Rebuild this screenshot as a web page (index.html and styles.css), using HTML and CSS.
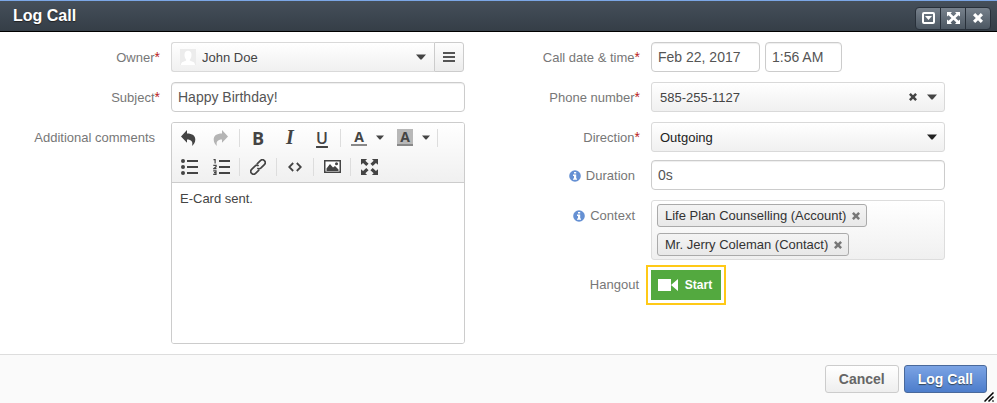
FILE: index.html
```html
<!DOCTYPE html>
<html lang="en">
<head>
<meta charset="utf-8">
<title>Log Call</title>
<link rel="stylesheet" href="styles.css">
</head>
<body>
<svg class="defs" aria-hidden="true">
  <symbol id="caret" viewBox="0 0 10 6"><path d="M0 0.500h10L5.600 5.500h-1.200z"/></symbol>
  <symbol id="cross" viewBox="0 0 10 10"><path d="M2.200 0 5 2.800 7.800 0 10 2.200 7.200 5 10 7.800 7.800 10 5 7.200 2.200 10 0 7.800 2.800 5 0 2.200z"/></symbol>
  <symbol id="info" viewBox="0 0 12 12"><circle cx="6" cy="6" r="5.800" fill="#6590d3"/><path d="M5 2h2.200v1.600H5zM4 4.600h3.200V8.400H8V9.800H4V8.400h1V6H4z" fill="#fff"/></symbol>
  <symbol id="expand" viewBox="0 0 18 18"><path d="M0 0h7L4.800 2.200 8 5.400 5.400 8 2.200 4.800 0 7zM18 0v7l-2.200-2.200L12.600 8 10 5.400l3.200-3.200L11 0zM0 18v-7l2.200 2.200L5.400 10 8 12.600l-3.200 3.200L7 18zM18 18h-7l2.200-2.200L10 12.600l2.600-2.600 3.200 3.200L18 11z"/></symbol>
</svg>
<form class="dialog">
  <header class="titlebar">
    <h1>Log Call</h1>
    <div class="window-buttons">
      <button type="button" aria-label="Minimize"><svg width="13" height="12" viewBox="0 0 13 12"><rect x="1" y="1" width="11" height="10" rx="1" fill="none" stroke="#fff" stroke-width="2"/><path d="M3 4h7L6.500 8z"/></svg></button>
      <button type="button" aria-label="Maximize"><svg width="13" height="12" viewBox="0 0 13 12"><path d="M0 0h5L3.600 1.400 6.500 4.200 9.400 1.400 8 0h5v4.600L11.500 3.200 8.500 6l3 2.800L13 7.400V12H8l1.400-1.400L6.500 7.800 3.600 10.600 5 12H0V7.400l1.500 1.400 3-2.800-3-2.800L0 4.600z"/></svg></button>
      <button type="button" aria-label="Close"><svg width="10" height="10"><use href="#cross"/></svg></button>
    </div>
  </header>
  <main class="fields">
    <section class="column">
      <div class="row">
        <label class="required" for="owner">Owner</label>
        <div class="field owner">
          <div class="picker">
            <svg class="avatar" width="16" height="16" viewBox="0 0 16 16"><path d="M0 0h16v16H0z" fill="#ececec"/><path d="M1 16c0-3 2.500-3.200 4.800-4.200.6-.3.500-1 .1-1.600C4.700 9 4.500 7 4.500 5.500 4.500 3 6 1.800 8 1.800s3.500 1.200 3.500 3.700c0 1.500-.2 3.500-1.400 4.700-.4.600-.5 1.300.1 1.600C12.500 12.800 15 13 15 16z" fill="#fff"/></svg>
            <select id="owner"><option>John Doe</option></select>
            <svg class="caret" width="10" height="6"><use href="#caret"/></svg>
          </div>
          <button type="button" class="list-button" aria-label="Browse"><svg width="12" height="10" viewBox="0 0 12 10"><path d="M0 0h12v2H0zM0 4h12v2H0zM0 8h12v2H0z"/></svg></button>
        </div>
      </div>
      <div class="row">
        <label class="required" for="subject">Subject</label>
        <div class="field"><input class="text" id="subject" value="Happy Birthday!"></div>
      </div>
      <div class="row">
        <label for="comments">Additional comments</label>
        <div class="field editor">
          <div class="toolbar">
            <div class="tools">
              <button type="button" aria-label="Undo"><svg width="16" height="16" viewBox="0 0 16 16"><path d="M6 0v3.500c5.500 0 8.300 2.200 8.300 6 0 2.500-1 4.500-3.300 6.500 1.200-4.200-.5-6.500-5-6.500v3.300L0 6.400z"/></svg></button>
              <button type="button" class="off" aria-label="Redo"><svg width="16" height="16" viewBox="0 0 16 16"><path d="M9 0v3.500C3.500 3.500.7 5.700.7 9.500c0 2.500 1 4.500 3.300 6.500-1.200-4.200.5-6.500 5-6.500v3.300l6-6.400z"/></svg></button>
              <i class="split"></i>
              <button type="button" class="bold">B</button>
              <button type="button" class="italic">I</button>
              <button type="button" class="underline">U</button>
              <i class="split"></i>
              <button type="button" class="menu"><span class="color">A</span><svg width="8" height="5"><use href="#caret"/></svg></button>
              <button type="button" class="menu"><span class="color fill">A</span><svg width="8" height="5"><use href="#caret"/></svg></button>
              <i class="split"></i>
            </div>
            <div class="tools">
              <button type="button" aria-label="Bulleted list"><svg width="17" height="16" viewBox="0 0 17 16"><circle cx="2" cy="2" r="2"/><circle cx="2" cy="8" r="2"/><circle cx="2" cy="14" r="2"/><path d="M6 1h11v2H6zM6 7h11v2H6zM6 13h11v2H6z"/></svg></button>
              <button type="button" aria-label="Numbered list"><svg width="17" height="16" viewBox="0 0 17 16"><path d="M6 1h11v2H6zM6 7h11v2H6zM6 13h11v2H6z"/><path d="M.5.600H2.100v3.900M.3 6.300h2.800v1.400L.8 9.700H3.500M.2 11.800h2.800v3.600H.2M1 13.600h2" fill="none" stroke="#444" stroke-width="1.200"/></svg></button>
              <i class="split"></i>
              <button type="button" aria-label="Link"><svg width="16" height="16" viewBox="0 0 16 16"><g fill="none" stroke="#444" stroke-width="1.700" transform="rotate(-45 8 8)"><path d="M6.800 10.800H1.800a2.800 2.800 0 0 1 0-5.600h4.700a2.800 2.800 0 0 1 2.700 2.500"/><path d="M9.200 5.200h5a2.800 2.800 0 0 1 0 5.600H9.500a2.800 2.800 0 0 1-2.700-2.500"/></g></svg></button>
              <i class="split"></i>
              <button type="button" aria-label="Source"><svg width="14" height="10" viewBox="0 0 14 10"><path d="M5.200 1 1.200 5l4 4M8.800 1l4 4-4 4" fill="none" stroke="#444" stroke-width="1.800"/></svg></button>
              <i class="split"></i>
              <button type="button" aria-label="Image"><svg width="17" height="13" viewBox="0 0 17 13"><path d="M.75.75h15.500v11.500H.75z" fill="#fff" stroke="#444" stroke-width="1.500"/><path d="M2.500 11V8.500L6 4l3 3.500L11 6l3.500 3.500V11z"/><circle cx="12.500" cy="3.700" r="1.500"/></svg></button>
              <i class="split"></i>
              <button type="button" aria-label="Full screen"><svg width="17" height="16" viewBox="0 0 18 18" preserveAspectRatio="none"><path d="M0 0h6.500L4.600 2 8 5.400 5.600 7.800 2.200 4.400 0 6.500zM18 0v6.500l-2.200-2.100-3.400 3.400L10 5.400 13.400 2 11.500 0zM0 18v-6.500l2.200 2.100 3.400-3.400L8 12.600 4.600 16l1.900 2zM18 18h-6.500l1.900-2L10 12.600l2.400-2.400 3.400 3.400 2.200-2.100z"/></svg></button>
            </div>
          </div>
          <textarea id="comments">E-Card sent.</textarea>
        </div>
      </div>
    </section>
    <section class="column">
      <div class="row">
        <label class="required" for="date">Call date &amp; time</label>
        <div class="field moment">
          <input class="text date" id="date" value="Feb 22, 2017">
          <input class="text time" aria-label="Time" value="1:56 AM">
        </div>
      </div>
      <div class="row">
        <label class="required" for="phone">Phone number</label>
        <div class="field picker">
          <select id="phone"><option>585-255-1127</option></select>
          <button type="button" class="clear" aria-label="Clear"><svg width="8" height="8"><use href="#cross"/></svg></button>
          <svg class="caret" width="10" height="6"><use href="#caret"/></svg>
        </div>
      </div>
      <div class="row tight">
        <label class="required" for="direction">Direction</label>
        <div class="field picker dark">
          <select id="direction"><option>Outgoing</option></select>
          <svg class="caret" width="10" height="6"><use href="#caret"/></svg>
        </div>
      </div>
      <div class="row">
        <label for="duration"><svg class="info" width="12" height="12"><use href="#info"/></svg>Duration</label>
        <div class="field"><input class="text" id="duration" value="0s"></div>
      </div>
      <div class="row">
        <span class="label" id="context"><svg class="info" width="12" height="12"><use href="#info"/></svg>Context</span>
        <div class="field tags" role="group" aria-labelledby="context">
          <span class="tag">Life Plan Counselling (Account)<button type="button" aria-label="Remove account"><svg width="8" height="8"><use href="#cross"/></svg></button></span>
          <span class="tag">Mr. Jerry Coleman (Contact)<button type="button" aria-label="Remove contact"><svg width="8" height="8"><use href="#cross"/></svg></button></span>
        </div>
      </div>
      <div class="row">
        <label class="plain" for="hangout">Hangout</label>
        <button type="button" class="start" id="hangout"><svg width="20" height="12" viewBox="0 0 20 12"><path d="M0 0h13v12H0zM13 6l7-6v12z"/></svg>Start</button>
      </div>
    </section>
  </main>
  <footer class="actions">
    <button type="button" class="action">Cancel</button>
    <button type="submit" class="action primary">Log Call</button>
    <svg class="grip" width="11" height="10" viewBox="0 0 11 10"><path d="M0.500 9.500 9.500 0.500M4.500 9.500l5-5M8.500 9.500l1-1" stroke="#000" stroke-width="1.500"/></svg>
  </footer>
</form>
</body>
</html>
```

FILE: styles.css
```css
* { box-sizing: border-box; }

body {
  margin: 0;
  background: #fff;
  color: #444;
  font: 13px/20px "Liberation Sans", Arial, sans-serif;
}

svg { display: block; fill: currentColor; flex: none; }
.defs { position: absolute; width: 0; height: 0; }

button, input, select, textarea { font: inherit; color: inherit; margin: 0; }
button {
  display: flex;
  align-items: center;
  justify-content: center;
  padding: 0;
  border: 0;
  background: none;
}

.dialog { display: flex; flex-direction: column; min-height: 100vh; }

.titlebar {
  display: flex;
  align-items: center;
  justify-content: space-between;
  height: 32px;
  padding: 0 6px 0 13px;
  border-top: 1px solid #7ba6e6;
  border-bottom: 1px solid #000;
  background: linear-gradient(#454f5a, #353e47);
  color: #fff;
}
.titlebar h1 { margin: 0; font-size: 16px; line-height: 28px; text-shadow: 0 1px 1px #222; }

.window-buttons {
  display: flex;
  margin-top: 4px;
  border: 1px solid #28303a;
  border-radius: 4px;
  background: linear-gradient(#77818c, #4b5661);
}
.window-buttons button { width: 24px; height: 21px; }
.window-buttons button + button { width: 25px; border-left: 1px solid #28303a; }

.fields {
  display: grid;
  grid-template-columns: 1fr 1fr;
  gap: 15px;
  flex: 1;
  padding: 10px 52px 10px 0;
}

.row { display: flex; gap: 11px; margin-bottom: 10px; }
.row.tight { margin-bottom: 8px; }
.row:last-child { margin-bottom: 0; }

label, .label {
  display: flex;
  align-items: center;
  justify-content: flex-end;
  flex: none;
  width: 160px;
  height: 30px;
  padding: 2px 5px 0 0;
  color: #777;
}
label.required { padding-right: 0; }
label.required::after { content: "*"; color: #b22; font-size: 14px; margin-bottom: 2px; }
label.plain { padding: 0 1px 0 0; }
.info { margin-right: 5px; }

.field { flex: 1; min-width: 0; }

.text {
  display: block;
  width: 100%;
  height: 30px;
  padding: 0 6px;
  border: 1px solid #ccc;
  border-radius: 4px;
  background: #fff;
  box-shadow: inset 0 1px 1px #eee;
  font-size: 14px;
  color: #555;
}

.picker { position: relative; }
.picker select {
  display: block;
  appearance: none;
  width: 100%;
  height: 30px;
  padding: 2px 8px 0;
  border: 1px solid #d9d9d9;
  border-radius: 3px;
  background: linear-gradient(#fff, #f0f0f0);
}
.picker.dark { color: #222; }
.picker .caret { position: absolute; right: 8px; top: 12px; pointer-events: none; }
.clear { position: absolute; right: 28px; top: 11px; }

.owner { display: flex; padding-right: 1px; }
.owner .picker { flex: 1; }
.owner select { padding-left: 30px; border-radius: 3px 0 0 3px; border-right: 0; }
.avatar { position: absolute; left: 9px; top: 7px; }
.list-button {
  width: 30px;
  height: 30px;
  border: 1px solid #ccc;
  border-radius: 0 3px 3px 0;
  background: linear-gradient(#fdfdfd, #ececec);
  color: #555;
}

.editor { border: 1px solid #ccc; border-radius: 3px; overflow: hidden; }
.toolbar {
  padding: 0 1px 1px;
  border-bottom: 1px solid #ccc;
  background: linear-gradient(#fff, #f0f0f0);
}
.tools { display: flex; align-items: center; height: 29px; }
.tools button { width: 32px; height: 28px; }
.tools .off { color: #b4b4b4; }
.tools .bold { font: bold 18px "Open Sans", sans-serif; }
.tools .italic { font: italic bold 20px "Liberation Serif", serif; }
.tools .underline { font: 600 16px "Open Sans", sans-serif; text-decoration: underline 2px; text-underline-offset: 2px; }
.tools .menu { width: 46px; justify-content: flex-start; gap: 9px; padding-left: 8px; }
.split { width: 1px; height: 18px; margin: 0 2px; background: #ddd; }
.color {
  width: 16px;
  height: 17px;
  border-bottom: 2px solid #888;
  font: bold 14px/16px "Open Sans", sans-serif;
  text-align: center;
}
.color.fill { background: #b8b8b8; }
.editor textarea {
  display: block;
  width: 100%;
  height: 160px;
  padding: 6px 8px;
  border: 0;
  background: #fff;
  resize: none;
}

.moment { display: flex; gap: 5px; }
.date { width: 109px; }
.time { width: 77px; }

.tags {
  display: flex;
  flex-direction: column;
  align-items: flex-start;
  gap: 6px;
  padding: 3px 5px;
  border: 1px solid #ddd;
  border-radius: 3px;
  background: linear-gradient(#fff, #f0f0f0);
}
.tag {
  display: flex;
  align-items: center;
  gap: 6px;
  height: 23px;
  padding: 0 6px 0 7px;
  border: 1px solid #aaa;
  border-radius: 3px;
  background: linear-gradient(#f4f4f4, #e8e8e8);
  color: #333;
}
.tag button { color: #777; }

.start {
  gap: 7px;
  width: 70px;
  height: 30px;
  padding-right: 2px;
  outline: 2px solid #ffc917;
  outline-offset: 3px;
  background: #53a93f;
  color: #fff;
  font-size: 12px;
  font-weight: bold;
}

.actions {
  position: relative;
  display: flex;
  align-items: flex-start;
  justify-content: flex-end;
  gap: 5px;
  height: 49px;
  padding: 10px;
  border-top: 1px solid #ddd;
  background: #fafafa;
}
.action {
  height: 28px;
  padding: 0 13px;
  border: 1px solid #ccc;
  border-radius: 3px;
  background: linear-gradient(#fff, #eee);
  color: #666;
  font-size: 14px;
  font-weight: bold;
}
.action.primary {
  border-color: #49699b;
  background: linear-gradient(#7ba3e4, #4d7dcb);
  color: #fff;
  text-shadow: 0 1px 1px #345;
}
.grip { position: absolute; right: 2px; bottom: 1px; }
```
